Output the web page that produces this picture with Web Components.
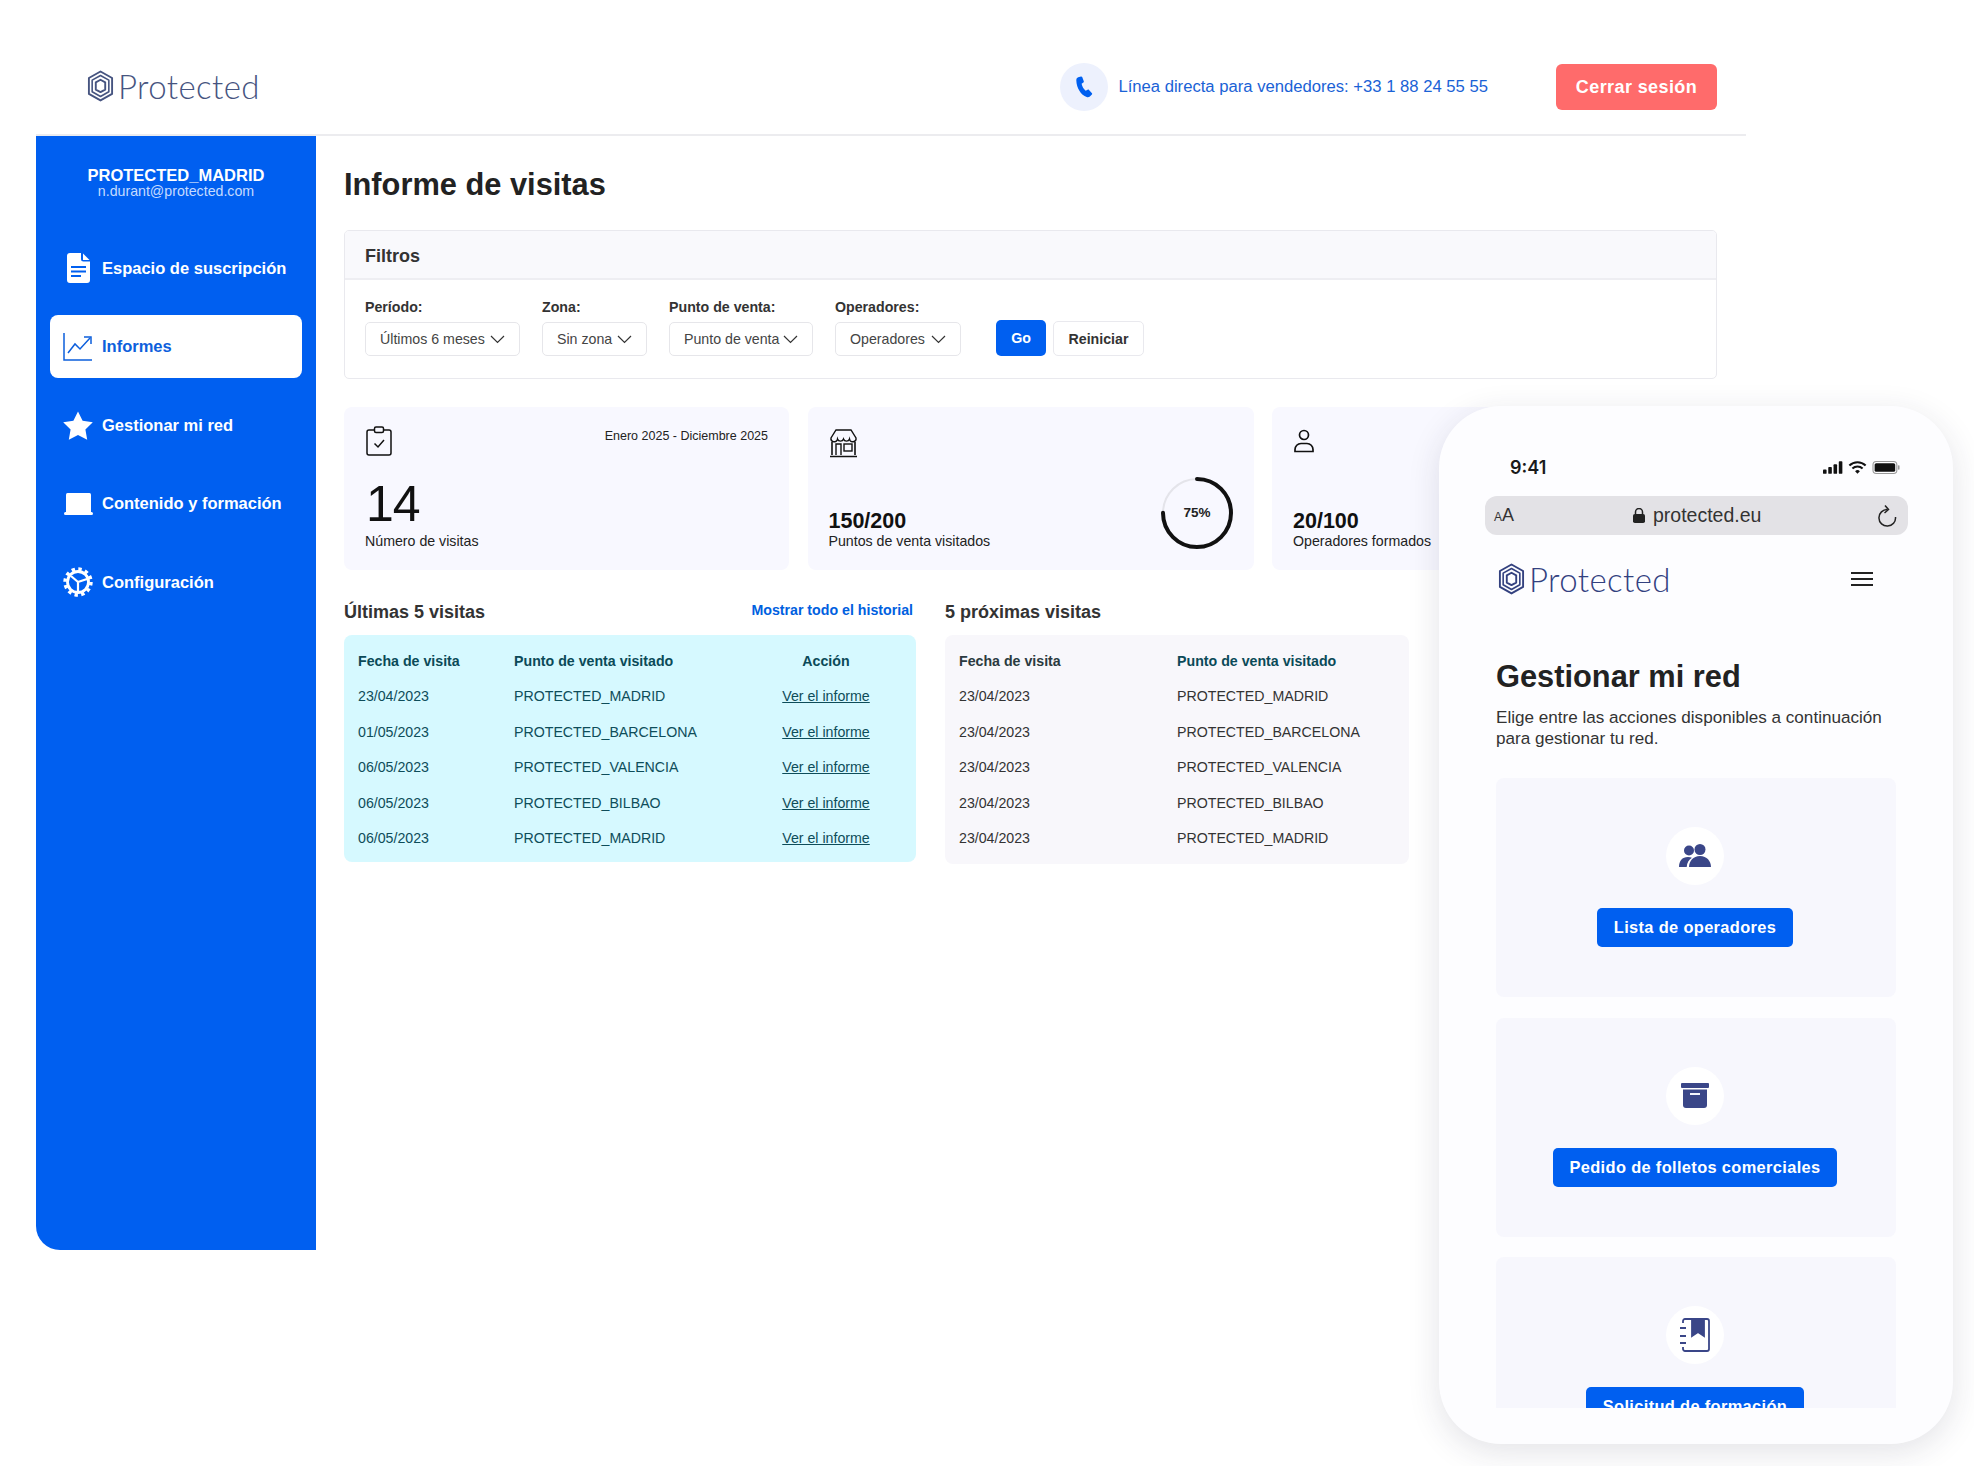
<!DOCTYPE html>
<html lang="es">
<head>
<meta charset="utf-8">
<title>Informe de visitas</title>
<style>
  html, body { margin: 0; background: #fff; }
  body { width: 1974px; height: 1466px; overflow: hidden; position: relative; font-family: "Liberation Sans", Arial, sans-serif; color: #222; }
</style>
</head>
<body>
<app-shell></app-shell>
<phone-mock></phone-mock>

<script>
const hexLogo = (size, color) => `
  <svg width="${size}" height="${size * 1.1}" viewBox="0 0 40 44" fill="none" stroke="${color}" stroke-linejoin="round" style="flex:none">
    <path d="M20 2 L36 11 V33 L20 42 L4 33 V11 Z" stroke-width="2.6"/>
    <path d="M20 7.5 L31.5 14 V30 L20 36.5 L8.5 30 V14 Z" stroke-width="2.2"/>
    <path d="M20 13.5 L26.5 17 V27 L20 30.5 L13.5 27 V17 Z" stroke-width="2.6"/>
  </svg>`;

const icons = {
  phone: `<svg width="24" height="24" viewBox="0 0 24 24" fill="#0060f0"><path d="M6.2 2.2 9 1.4c.5-.1 1 .1 1.2.6l1.6 4.3c.2.5 0 1-.4 1.3L9.6 8.8c.6 2.8 2 5.2 4.1 7l1.9-1.1c.5-.3 1-.2 1.4.2l3 3.4c.3.4.3 1-.1 1.3l-2 2c-.9.8-2.1 1-3.2.5C8.9 19.8 4.5 13.3 4.3 5.2c0-1.4.7-2.6 1.9-3z"/></svg>`,
  doc: `<svg width="23" height="30" viewBox="0 0 23 30"><path d="M3 0h11v6a2.5 2.5 0 0 0 2.5 2.5H23V27a3 3 0 0 1-3 3H3a3 3 0 0 1-3-3V3a3 3 0 0 1 3-3z" fill="#fff"/><path d="M16 .5 22.5 7H16z" fill="#fff"/><path d="M4 14h15M4 18.5h15M4 23h10" stroke="#005ff0" stroke-width="2"/></svg>`,
  chart: `<svg width="30" height="29" viewBox="0 0 30 29" fill="none" stroke="#0d5fdc" stroke-width="1.5"><path d="M1 1v27h28"/><path d="M5 21 12 12l5 5 10-11"/><path d="M21 5h7v7"/></svg>`,
  star: `<svg width="30" height="29" viewBox="0 0 30 29"><path d="M15 .5l4.6 9.3 10.2 1.5-7.4 7.2 1.8 10.2L15 23.9l-9.2 4.8 1.8-10.2L.2 11.3l10.2-1.5z" fill="#fff"/></svg>`,
  laptop: `<svg width="29" height="22" viewBox="0 0 29 22"><path d="M3.5 0h22A1.5 1.5 0 0 1 27 1.5V19H2V1.5A1.5 1.5 0 0 1 3.5 0z" fill="#fff"/><rect x="0" y="19" width="29" height="3" rx="1.5" fill="#fff"/></svg>`,
  gear: `<svg width="30" height="30" viewBox="0 0 30 30" fill="none" stroke="#fff"><circle cx="15" cy="15" r="10.5" stroke-width="2.8"/><circle cx="15" cy="15" r="13" stroke-width="3.4" stroke-dasharray="3.4 3.4"/><path d="M15 15 8 9M15 15l9-3M15 15v10" stroke-width="2.2"/></svg>`,
  clipboard: `<svg width="26" height="30" viewBox="0 0 26 30" fill="none" stroke="#111" stroke-width="1.5"><path d="M8 4H3a2 2 0 0 0-2 2v21a2 2 0 0 0 2 2h20a2 2 0 0 0 2-2V6a2 2 0 0 0-2-2h-5"/><rect x="8.5" y="1" width="9" height="5.5" rx="1.5"/><path d="M8.5 17.5l3.5 3.5 6-7"/></svg>`,
  store: `<svg class="low" width="29" height="29" viewBox="0 0 29 29" fill="none" stroke="#111" stroke-width="1.4"><path d="M7 1h15l5 8a3.2 3.2 0 0 1-6.5 1 3.2 3.2 0 0 1-6 0 3.2 3.2 0 0 1-6 0A3.2 3.2 0 0 1 2 9z"/><path d="M3 13v13M26 13v13M1 27.5h27" stroke-width="1.6"/><path d="M7 26V15h5v11"/><rect x="15" y="15" width="8" height="7"/></svg>`,
  person: `<svg class="low" width="22" height="24" viewBox="0 0 22 24" fill="none" stroke="#111" stroke-width="1.7"><circle cx="11" cy="6" r="4.5"/><path d="M2 22.5v-2A6 6 0 0 1 8 14.5h6a6 6 0 0 1 6 6v2z"/></svg>`,
  users: `<svg width="32" height="24" viewBox="0 0 32 24" fill="#3a4688"><circle cx="10" cy="6.5" r="5"/><circle cx="21" cy="5.5" r="5.5"/><path d="M0 23c0-6 3-10 9-10 1.5 0 2.8.3 3.9.8C9.8 15.8 8 19 7.7 23z"/><path d="M10 23c.2-6 4-11 11-11s10.8 5 11 11z"/></svg>`,
  archive: `<svg width="28" height="26" viewBox="0 0 28 26" fill="#3a4688"><rect y="0" width="28" height="5" rx="1"/><path d="M2 6.5h24V22a3 3 0 0 1-3 3H5a3 3 0 0 1-3-3z"/><rect x="9" y="10" width="10" height="2" fill="#f4f5fc"/></svg>`,
  book: `<svg width="30" height="34" viewBox="0 0 30 34" fill="none" stroke="#3a4688" stroke-width="1.8"><path d="M3 5V3a2 2 0 0 1 2-2h22a2 2 0 0 1 2 2v28a2 2 0 0 1-2 2H5a2 2 0 0 1-2-2v-2"/><path d="M12 1h12v17l-6-4-6 4z" fill="#3a4688"/><path d="M0 10h6M0 18h6M0 25h6" stroke-width="2"/></svg>`,
  lock: `<svg width="12" height="15" viewBox="0 0 12 15" style="flex:none"><path d="M2.5 6V4a3.5 3.5 0 0 1 7 0v2" fill="none" stroke="#222" stroke-width="1.5"/><rect y="6" width="12" height="9" rx="1.8" fill="#222"/></svg>`,
  reload: `<svg width="20" height="22" viewBox="0 0 20 22" fill="none" stroke="#222" stroke-width="1.5"><path d="M10.5 4.5A8.3 8.3 0 1 0 18.5 12"/><path d="M8 .5l3.5 4-4 3.5"/></svg>`,
  burger: `<svg width="22" height="14" viewBox="0 0 22 14" fill="#222"><rect width="22" height="2"/><rect y="6" width="22" height="2"/><rect y="12" width="22" height="2"/></svg>`,
  signal: `<svg width="20" height="13" viewBox="0 0 19 12" fill="#111"><rect y="8" width="3.4" height="4" rx=".8"/><rect x="5" y="5.5" width="3.4" height="6.5" rx=".8"/><rect x="10" y="3" width="3.4" height="9" rx=".8"/><rect x="15" width="3.4" height="12" rx=".8"/></svg>`,
  wifi: `<svg width="19" height="13" viewBox="0 0 17 12" fill="none" stroke="#111" stroke-width="1.9"><path d="M1 4.2a10.8 10.8 0 0 1 15 0"/><path d="M3.8 7a6.8 6.8 0 0 1 9.4 0"/><path d="M8.5 11.8 6.3 9.5a3 3 0 0 1 4.4 0z" fill="#111" stroke="none"/></svg>`,
  battery: `<svg width="28" height="13" viewBox="0 0 25 12"><rect x=".5" y=".5" width="22" height="11" rx="3" fill="none" stroke="#999"/><rect x="2" y="2" width="19" height="8" rx="1.5" fill="#111"/><rect x="23.5" y="4" width="1.5" height="4" rx=".7" fill="#999"/></svg>`,
  chevron: `<svg width="15" height="9" viewBox="0 0 15 9" fill="none" stroke="#333" stroke-width="1.2" style="flex:none"><path d="M1 1l6.5 6.5L14 1"/></svg>`,
};

class AppShell extends HTMLElement {
  constructor() {
    super();
    this.attachShadow({ mode: 'open' });
    this.render();
  }

  render() {
    this.shadowRoot.innerHTML = `
      <style>
        :host { display: block; }
        .body { display: flex; width: 1710px; margin-left: 36px; }
      </style>
      <top-bar></top-bar>
      <div class="body">
        <side-nav></side-nav>
        <report-page></report-page>
      </div>
    `;
  }
}
customElements.define('app-shell', AppShell);

class TopBar extends HTMLElement {
  constructor() {
    super();
    this.attachShadow({ mode: 'open' });
    this.shadowRoot.innerHTML = `
      <style>
        :host { display: flex; align-items: center; box-sizing: border-box; width: 1710px; height: 136px; margin-left: 36px; padding: 38px 29px 0 50px; border-bottom: 2px solid #ececef; }
        .logo { display: flex; align-items: center; gap: 3px; color: #465480; font: 300 33px Lato, sans-serif; letter-spacing: .4px; }
        .hotline { display: flex; align-items: center; gap: 10px; margin-left: auto; color: #1a62d6; font-size: 16.65px; margin-top: 2px; }
        .circle { display: flex; align-items: center; justify-content: center; width: 48px; height: 48px; border-radius: 50%; background: #edf1fd; }
        .logout { display: flex; align-items: center; justify-content: center; width: 161px; height: 46px; margin-left: 68px; margin-top: 2px; border-radius: 6px; background: #ff6b6b; color: #fff; font-size: 18px; font-weight: bold; letter-spacing: .4px; }
      </style>
      <div class="logo">${hexLogo(29, '#465480')}<span>Protected</span></div>
      <div class="hotline"><span class="circle">${icons.phone}</span><span>Línea directa para vendedores: +33 1 88 24 55 55</span></div>
      <div class="logout">Cerrar sesión</div>
    `;
  }
}
customElements.define('top-bar', TopBar);

class SideNav extends HTMLElement {
  constructor() {
    super();
    this.attachShadow({ mode: 'open' });
    const items = [
      ['doc', 'Espacio de suscripción'],
      ['chart', 'Informes', true],
      ['star', 'Gestionar mi red'],
      ['laptop', 'Contenido y formación'],
      ['gear', 'Configuración'],
    ];
    this.shadowRoot.innerHTML = `
      <style>
        :host { display: block; box-sizing: border-box; flex: none; width: 280px; height: 1114px; padding: 30px 14px 0; background: #005ff0; border-bottom-left-radius: 24px; color: #fff; }
        .account { text-align: center; margin-bottom: 37.5px; }
        .name { font-size: 16.5px; font-weight: bold; line-height: 18px; }
        .mail { font-size: 14.2px; line-height: 15px; color: #c5dbff; }
        .list { display: flex; flex-direction: column; gap: 15.5px; }
        .item { display: flex; align-items: center; height: 63px; border-radius: 8px; font-size: 16.5px; font-weight: bold; }
        .item.active { background: #fff; color: #0d5fdc; }
        .ic { display: flex; justify-content: center; width: 30px; margin: 0 9px 0 13px; }
      </style>
      <div class="account">
        <div class="name">PROTECTED_MADRID</div>
        <div class="mail">n.durant@protected.com</div>
      </div>
      <div class="list">
        ${items.map(([icon, label, active]) => `
          <div class="item ${active ? 'active' : ''}"><span class="ic">${icons[icon]}</span>${label}</div>
        `).join('')}
      </div>
    `;
  }
}
customElements.define('side-nav', SideNav);

class FilterSelect extends HTMLElement {
  constructor() {
    super();
    this.attachShadow({ mode: 'open' });
    this.shadowRoot.innerHTML = `
      <style>
        :host { display: flex; flex-direction: column; gap: 6px; }
        label { font-size: 14.2px; font-weight: bold; color: #333; line-height: 18px; }
        .box { display: flex; align-items: center; justify-content: space-between; box-sizing: border-box; height: 34px; padding: 0 14px; border: 1px solid #e6e6ea; border-radius: 5px; font-size: 14.2px; color: #444; background: #fff; }
      </style>
      <label>${this.getAttribute('label')}</label>
      <div class="box" style="width:${this.getAttribute('w')}px"><span>${this.getAttribute('value')}</span>${icons.chevron}</div>
    `;
  }
}
customElements.define('filter-select', FilterSelect);

class FilterPanel extends HTMLElement {
  constructor() {
    super();
    this.attachShadow({ mode: 'open' });
    this.shadowRoot.innerHTML = `
      <style>
        :host { display: block; box-sizing: border-box; height: 149px; border: 1px solid #e9e9ee; border-radius: 5px; overflow: hidden; }
        .head { box-sizing: border-box; height: 49px; padding: 4px 20px 0; display: flex; align-items: center; background: #f9f9fc; border-bottom: 2px solid #eeeef2; font-size: 18px; font-weight: bold; color: #333; }
        .row { display: flex; align-items: flex-end; gap: 22px; padding: 18px 20px 0; }
        .go { display: flex; align-items: center; justify-content: center; width: 50px; height: 36px; margin-left: 13px; border-radius: 5px; background: #005ff0; color: #fff; font-size: 14.2px; font-weight: bold; }
        .reset { display: flex; align-items: center; justify-content: center; box-sizing: border-box; width: 91px; height: 35px; margin-left: -15px; border: 1px solid #e9e9ee; border-radius: 5px; color: #333; font-size: 14.2px; font-weight: bold; }
      </style>
      <div class="head">Filtros</div>
      <div class="row">
        <filter-select label="Período:" value="Últimos 6 meses" w="155"></filter-select>
        <filter-select label="Zona:" value="Sin zona" w="105"></filter-select>
        <filter-select label="Punto de venta:" value="Punto de venta" w="144"></filter-select>
        <filter-select label="Operadores:" value="Operadores" w="126"></filter-select>
        <div class="go">Go</div>
        <div class="reset">Reiniciar</div>
      </div>
    `;
  }
}
customElements.define('filter-panel', FilterPanel);

class StatCard extends HTMLElement {
  constructor() {
    super();
    this.attachShadow({ mode: 'open' });
    this.shadowRoot.innerHTML = `
      <style>
        :host { display: block; position: relative; box-sizing: border-box; height: 163px; padding: 19px 21px; border-radius: 8px; background: #f8f8ff; }
        .top { display: flex; justify-content: space-between; align-items: flex-start; height: 32px; font-size: 12.5px; color: #222; }
        .top svg { margin-left: 1px; }
        .top svg.low { margin: 3px 0 0; }
        .date { margin-top: 3px; }
        .foot { position: absolute; left: 21px; bottom: 20px; }
        .big { font-size: 50px; line-height: 58px; letter-spacing: -1px; margin-left: 1px; color: #111; margin-bottom: -1px; }
        .val { font-size: 21.5px; font-weight: bold; line-height: 22px; color: #111; margin-bottom: 0; }
        .lab { font-size: 14.2px; line-height: 18px; color: #222; white-space: nowrap; }
        ::slotted(progress-ring) { position: absolute; right: 20px; bottom: 20px; }
      </style>
      <div class="top">${icons[this.getAttribute('icon')]}<span class="date">${this.getAttribute('date') || ''}</span></div>
      <div class="foot">
        <div class="${this.hasAttribute('big') ? 'big' : 'val'}">${this.getAttribute('value')}</div>
        <div class="lab">${this.getAttribute('label')}</div>
      </div>
      <slot></slot>
    `;
  }
}
customElements.define('stat-card', StatCard);

class ProgressRing extends HTMLElement {
  constructor() {
    super();
    this.attachShadow({ mode: 'open' });
    const r = 34;
    const c = 2 * Math.PI * r;
    this.shadowRoot.innerHTML = `
      <style>
        :host { display: block; width: 74px; height: 74px; }
        text { font: bold 13.5px "Liberation Sans", Arial, sans-serif; fill: #222; }
      </style>
      <svg width="74" height="74" viewBox="0 0 74 74">
        <circle cx="37" cy="37" r="${r}" fill="none" stroke="#e4e4ea" stroke-width="2"/>
        <circle cx="37" cy="37" r="${r}" fill="none" stroke="#111" stroke-width="4" stroke-linecap="round" stroke-dasharray="${c * .75} ${c}" transform="rotate(-90 37 37)"/>
        <text x="37" y="41" text-anchor="middle">75%</text>
      </svg>
    `;
  }
}
customElements.define('progress-ring', ProgressRing);

class VisitTable extends HTMLElement {
  constructor() {
    super();
    this.attachShadow({ mode: 'open' });
    const rows = JSON.parse(this.getAttribute('rows'));
    const withAction = this.hasAttribute('action');
    this.shadowRoot.innerHTML = `
      <style>
        :host { display: block; }
        .title { display: flex; justify-content: space-between; align-items: center; height: 24px; margin-bottom: 11px; font-size: 18px; font-weight: bold; color: #333; }
        a { font-size: 14.2px; color: #0060e0; margin: -4px 3px 0 0; }
        .grid { display: grid; grid-template-columns: ${this.getAttribute('cols')}; grid-auto-rows: 35.5px; align-items: center; box-sizing: border-box; height: ${withAction ? 227 : 229}px; padding: 8px ${withAction ? 4 : 14}px 7px 14px; border-radius: 8px; background: ${this.getAttribute('bg')}; color: ${this.getAttribute('fg')}; font-size: 14.2px; }
        .h { font-weight: bold; color: ${this.getAttribute('hd')}; }
        .h2 { font-weight: bold; color: #0b4a58; }
        .act { text-align: center; }
        .lnk { text-decoration: underline; }
      </style>
      <div class="title"><span>${this.getAttribute('heading')}</span>${withAction ? '<a>Mostrar todo el historial</a>' : ''}</div>
      <div class="grid">
        <div class="h">Fecha de visita</div><div class="h2">Punto de venta visitado</div>${withAction ? '<div class="h2 act">Acción</div>' : ''}
        ${rows.map(([date, shop]) => `<div>${date}</div><div>${shop}</div>${withAction ? '<div class="act lnk">Ver el informe</div>' : ''}`).join('')}
      </div>
    `;
  }
}
customElements.define('visit-table', VisitTable);

class ReportPage extends HTMLElement {
  constructor() {
    super();
    this.attachShadow({ mode: 'open' });
    const shops = ['PROTECTED_MADRID', 'PROTECTED_BARCELONA', 'PROTECTED_VALENCIA', 'PROTECTED_BILBAO', 'PROTECTED_MADRID'];
    const past = ['23/04/2023', '01/05/2023', '06/05/2023', '06/05/2023', '06/05/2023'];
    const pastRows = JSON.stringify(shops.map((s, i) => [past[i], s]));
    const nextRows = JSON.stringify(shops.map((s) => ['23/04/2023', s]));
    this.shadowRoot.innerHTML = `
      <style>
        :host { display: block; box-sizing: border-box; flex: 1; min-width: 0; padding: 28px 29px 0 28px; }
        h1 { margin: 0 0 24px; font-size: 30.8px; line-height: 42px; font-weight: bold; color: #222; }
        .stats { display: grid; grid-template-columns: 445px 446px 445px; gap: 18.5px; margin: 28px 0 30px; }
        .tables { display: grid; grid-template-columns: 572px 464px; gap: 29px; }
      </style>
      <h1>Informe de visitas</h1>
      <filter-panel></filter-panel>
      <div class="stats">
        <stat-card icon="clipboard" date="Enero 2025 - Diciembre 2025" value="14" big label="Número de visitas"></stat-card>
        <stat-card icon="store" value="150/200" label="Puntos de venta visitados"><progress-ring></progress-ring></stat-card>
        <stat-card icon="person" value="20/100" label="Operadores formados"></stat-card>
      </div>
      <div class="tables">
        <visit-table heading="Últimas 5 visitas" action cols="156px 226px 1fr" bg="#d6f9ff" fg="#0e4d5a" hd="#0b4a58" rows='${pastRows}'></visit-table>
        <visit-table heading="5 próximas visitas" cols="218px 1fr" bg="#f8f7fb" fg="#333" hd="#2b3a40" rows='${nextRows}'></visit-table>
      </div>
    `;
  }
}
customElements.define('report-page', ReportPage);

class ActionCard extends HTMLElement {
  constructor() {
    super();
    this.attachShadow({ mode: 'open' });
    this.shadowRoot.innerHTML = `
      <style>
        :host { display: flex; flex-direction: column; align-items: center; flex: none; box-sizing: border-box; width: 400px; height: 219px; padding: 49px 2px 0 0; border-radius: 8px; background: #f7f7fd; }
        .dot { display: flex; align-items: center; justify-content: center; width: 58px; height: 58px; border-radius: 50%; background: #fff; }
        .btn { display: flex; align-items: center; justify-content: center; height: 39px; margin-top: 23px; padding: 0 17px; border-radius: 5px; background: #005ff0; color: #fff; font-size: 16.4px; font-weight: bold; letter-spacing: .35px; white-space: nowrap; }
      </style>
      <div class="dot">${icons[this.getAttribute('icon')]}</div>
      <div class="btn">${this.getAttribute('label')}</div>
    `;
  }
}
customElements.define('action-card', ActionCard);

class PhoneMock extends HTMLElement {
  constructor() {
    super();
    this.attachShadow({ mode: 'open' });
    this.shadowRoot.innerHTML = `
      <style>
        :host { display: flex; flex-direction: column; position: absolute; left: 1439px; top: 406px; box-sizing: border-box; width: 514px; height: 1038px; padding-top: 50px; border-radius: 62px; background: #fdfdff; box-shadow: 0 8px 32px rgba(40,40,70,.13); }
        .status { display: flex; align-items: center; justify-content: space-between; height: 22px; padding: 0 53px 0 71px; font: 600 18px Inter, sans-serif; color: #1a1a1a; }
        .status div { display: flex; align-items: center; gap: 5px; }
        .url { display: flex; align-items: center; box-sizing: border-box; height: 39px; margin: 18px 45px 0 46px; padding: 0 11px 0 9px; border-radius: 12px; background: #e3e2e6; color: #333; }
        .aa { width: 139px; font-size: 18px; }
        .aa small { font-size: 12px; }
        .addr { display: flex; align-items: center; gap: 8px; font-size: 19.5px; }
        .url svg:last-child { margin-left: auto; }
        .brand { display: flex; align-items: center; justify-content: space-between; height: 44px; margin: 22px 80px 0 58px; }
        .logo { display: flex; align-items: center; gap: 3px; color: #33417f; font: 300 33px Lato, sans-serif; letter-spacing: .4px; }
        h2 { margin: 55px 0 0 57px; font-size: 30.8px; line-height: 42px; font-weight: bold; color: #222; }
        p { margin: 9px 0 0 57px; font-size: 17.1px; line-height: 21px; color: #333; }
        .scroll { display: flex; flex-direction: column; gap: 20.5px; height: 630px; margin: 29px 0 0 57px; overflow: hidden; }
      </style>
      <div class="status"><span>9:41</span><div>${icons.signal}${icons.wifi}${icons.battery}</div></div>
      <div class="url">
        <span class="aa"><small>A</small>A</span>
        <span class="addr">${icons.lock}protected.eu</span>
        ${icons.reload}
      </div>
      <div class="brand"><div class="logo">${hexLogo(29, '#33417f')}<span>Protected</span></div>${icons.burger}</div>
      <h2>Gestionar mi red</h2>
      <p>Elige entre las acciones disponibles a continuación<br>para gestionar tu red.</p>
      <div class="scroll">
        <action-card icon="users" label="Lista de operadores"></action-card>
        <action-card icon="archive" label="Pedido de folletos comerciales"></action-card>
        <action-card icon="book" label="Solicitud de formación"></action-card>
      </div>
    `;
  }
}
customElements.define('phone-mock', PhoneMock);
</script>
</body>
</html>
